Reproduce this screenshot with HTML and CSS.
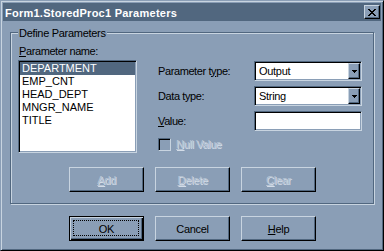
FILE: index.html
```html
<!DOCTYPE html>
<html lang="en">
<head>
  <meta charset="UTF-8">
  <title>Form1.StoredProc1 Parameters</title>
  <link rel="stylesheet" href="styles.css">
</head>
<body>
  <div class="window">
    <div class="titlebar">
      <span class="title">Form1.StoredProc1 Parameters</span>
      <span class="close">
        <svg width="8" height="7" viewBox="0 0 8 7"><path d="M0 0h2v1h-2z M6 0h2v1h-2z M1 1h2v1h-2z M5 1h2v1h-2z M2 2h4v1h-4z M3 3h2v1h-2z M2 4h4v1h-4z M1 5h2v1h-2z M5 5h2v1h-2z M0 6h2v1h-2z M6 6h2v1h-2z" fill="#000"/></svg>
      </span>
    </div>

    <div class="content">
      <div class="group">
        <span class="legend">Define Parameters</span>
        <div class="group-top">
          <div class="names">
            <div class="label name-label"><u>P</u>arameter name:</div>
            <ul class="listbox">
              <li class="selected">DEPARTMENT</li>
              <li>EMP_CNT</li>
              <li>HEAD_DEPT</li>
              <li>MNGR_NAME</li>
              <li>TITLE</li>
            </ul>
          </div>

          <div class="fields">
            <span class="label">Parameter t<u>y</u>pe:</span>
            <div class="combo">
              <span class="combo-text">Output</span>
              <span class="drop"><svg width="5" height="3" viewBox="0 0 5 3"><path d="M0 0h5v1h-5z M1 1h3v1h-3z M2 2h1v1h-1z" fill="#000"/></svg></span>
            </div>

            <span class="label">Data type:</span>
            <div class="combo">
              <span class="combo-text">String</span>
              <span class="drop"><svg width="5" height="3" viewBox="0 0 5 3"><path d="M0 0h5v1h-5z M1 1h3v1h-3z M2 2h1v1h-1z" fill="#000"/></svg></span>
            </div>

            <span class="label"><u>V</u>alue:</span>
            <div class="edit"></div>

            <div class="check disabled">
              <span class="box"></span>
              <span class="label"><u>N</u>ull Value</span>
            </div>
          </div>
        </div>

        <div class="buttons group-buttons">
          <button class="btn disabled"><u>A</u>dd</button>
          <button class="btn disabled"><u>D</u>elete</button>
          <button class="btn disabled"><u>C</u>lear</button>
        </div>
      </div>

      <div class="buttons dialog-buttons">
        <button class="btn default">OK</button>
        <button class="btn">Cancel</button>
        <button class="btn"><u>H</u>elp</button>
      </div>
    </div>
  </div>
</body>
</html>
```

FILE: styles.css
```css
body {
  margin: 0;
  font-family: "Liberation Sans", Arial, sans-serif;
  font-size: 11px;
  color: #000;
  background-color: #8a9eb6;
}

.window {
  width: 384px;
  height: 251px;
  box-sizing: border-box;
  padding: 2px;
  background-color: #8a9eb6;
  border: 1px solid;
  border-color: #8a9eb6 #000 #000 #8a9eb6;
  box-shadow: inset 1px 1px 0 #c8d4e0, inset -1px -1px 0 #51677f;
}

.titlebar {
  height: 18px;
  background-color: #51677f;
  display: flex;
  align-items: center;
  justify-content: space-between;
  padding: 0 1px 0 2px;
}

.title {
  color: #fff;
  font-weight: bold;
  font-size: 11px;
  line-height: 16px;
  padding-top: 2px;
  letter-spacing: 0.25px;
}

.close {
  width: 16px;
  height: 14px;
  box-sizing: border-box;
  background-color: #8a9eb6;
  border: 1px solid;
  border-color: #c8d4e0 #000 #000 #c8d4e0;
  box-shadow: inset -1px -1px 0 #51677f;
  display: flex;
  align-items: center;
  justify-content: center;
  padding-right: 1px;
}

.close svg {
  display: block;
}

.content {
  padding: 11px 7px 0 7px;
}

.group {
  position: relative;
  width: 364px;
  box-sizing: border-box;
  padding: 12px 0 11px 7px;
  border: 1px solid #51677f;
  box-shadow: 1px 1px 0 #c8d4e0, inset 1px 1px 0 #c8d4e0;
}

.legend {
  position: absolute;
  top: -6px;
  left: 7px;
  padding: 0 1px;
  line-height: 13px;
  background-color: #8a9eb6;
  letter-spacing: -0.3px;
}

.label {
  line-height: 13px;
  letter-spacing: -0.4px;
  white-space: nowrap;
}

.group-top {
  display: flex;
}

.names {
  width: 119px;
}

.name-label {
  padding-left: 1px;
  margin-bottom: 2px;
}

.listbox {
  list-style: none;
  margin: 0;
  padding: 1px;
  height: 93px;
  box-sizing: border-box;
  background-color: #fff;
  border: 1px solid;
  border-color: #51677f #c8d4e0 #c8d4e0 #51677f;
  box-shadow: inset 1px 1px 0 #000, inset -1px -1px 0 #8a9eb6;
}

.listbox li {
  height: 13px;
  line-height: 13px;
  padding-left: 2px;
}

.listbox li.selected {
  background-color: #51677f;
  color: #fff;
}

.fields {
  margin-left: 21px;
  margin-top: 16px;
  display: grid;
  grid-template-columns: 96px 108px;
  grid-template-rows: 20px 20px 20px 20px;
  row-gap: 5px;
  align-items: center;
}

.combo,
.edit {
  height: 20px;
  box-sizing: border-box;
  background-color: #fff;
  border: 1px solid;
  border-color: #51677f #c8d4e0 #c8d4e0 #51677f;
  box-shadow: inset 1px 1px 0 #000, inset -1px -1px 0 #8a9eb6;
}

.combo {
  display: flex;
  align-items: center;
  padding: 1px 1px 1px 4px;
}

.combo-text {
  letter-spacing: -0.3px;
}

.drop {
  margin-left: auto;
  width: 12px;
  height: 16px;
  box-sizing: border-box;
  background-color: #8a9eb6;
  border: 1px solid;
  border-color: #c8d4e0 #000 #000 #c8d4e0;
  box-shadow: inset -1px -1px 0 #51677f;
  display: flex;
  align-items: center;
  justify-content: center;
}

.drop svg {
  display: block;
}

.check {
  grid-column: 1 / -1;
  align-self: start;
  margin-top: 2px;
  display: flex;
  align-items: center;
}

.check .box {
  width: 13px;
  height: 13px;
  box-sizing: border-box;
  margin-right: 5px;
  border: 1px solid;
  border-color: #51677f #c8d4e0 #c8d4e0 #51677f;
  box-shadow: inset 1px 1px 0 #000, inset -1px -1px 0 #8a9eb6;
}

.disabled,
.check.disabled .label {
  color: #b6c4d4;
  text-shadow: 1px 1px 0 #d4dde8;
}

.buttons {
  display: flex;
  gap: 11px;
}

.group-buttons {
  margin: 11px 0 0 51px;
}

.dialog-buttons {
  margin: 12px 0 0 59px;
}

.btn {
  position: relative;
  width: 75px;
  height: 25px;
  box-sizing: border-box;
  padding: 0;
  font-family: inherit;
  font-size: 11px;
  letter-spacing: -0.3px;
  color: #000;
  background-color: #8a9eb6;
  border: 1px solid;
  border-color: #c8d4e0 #000 #000 #c8d4e0;
  box-shadow: inset -1px -1px 0 #51677f;
}

.btn.disabled {
  color: #b6c4d4;
}

.btn.default {
  border-color: #000;
  box-shadow: inset 1px 1px 0 #c8d4e0, inset -1px -1px 0 #000, inset -2px -2px 0 #51677f;
}

.btn.default::after {
  content: "";
  position: absolute;
  top: 3px;
  left: 3px;
  right: 4px;
  bottom: 4px;
  border: 1px dotted #000;
}
```
